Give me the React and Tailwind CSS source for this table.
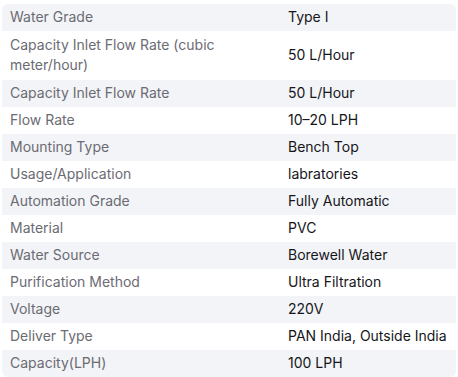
import React from 'react';

const specs = [
  ['Water Grade', 'Type I'],
  ['Capacity Inlet Flow Rate (cubic meter/hour)', '50 L/Hour', true],
  ['Capacity Inlet Flow Rate', '50 L/Hour'],
  ['Flow Rate', '10–20 LPH'],
  ['Mounting Type', 'Bench Top'],
  ['Usage/Application', 'labratories'],
  ['Automation Grade', 'Fully Automatic'],
  ['Material', 'PVC'],
  ['Water Source', 'Borewell Water'],
  ['Purification Method', 'Ultra Filtration'],
  ['Voltage', '220V'],
  ['Deliver Type', 'PAN India, Outside India'],
  ['Capacity(LPH)', '100 LPH'],
];

export default function App() {
  return (
    <div className="w-[458px] h-[377px] bg-white pt-[3.5px] px-[2px] font-['Inter',sans-serif] text-sm">
      <div className="rounded-md overflow-hidden">
        {specs.map(([label, value, tall], i) => (
          <div
            key={label}
            className={`grid grid-cols-[278px_1fr] items-center leading-5 ${tall ? 'py-[4.5px]' : 'py-[3.5px]'} ${i % 2 === 0 ? 'bg-[#f3f4f7]' : 'bg-white'}`}
          >
            <div className="px-2 text-[#6b6b73]">{label}</div>
            <div className="px-2 text-[#16161a]">{value}</div>
          </div>
        ))}
      </div>
    </div>
  );
}
